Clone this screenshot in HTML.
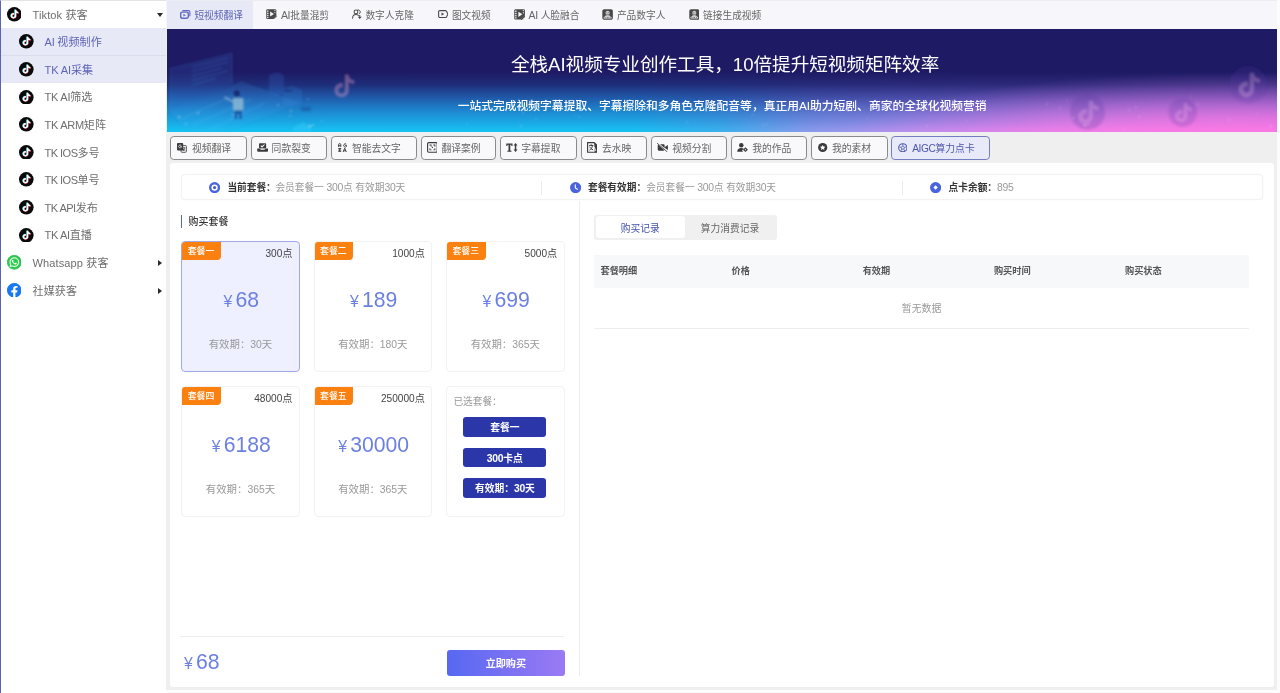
<!DOCTYPE html>
<html lang="zh-CN">
<head>
<meta charset="utf-8">
<title>AIGC算力点卡</title>
<style>
*{box-sizing:border-box;margin:0;padding:0}
html,body{width:1280px;height:693px;overflow:hidden;background:#fcfcfc}
body{font-family:"Liberation Sans","Noto Sans CJK SC",sans-serif;color:#666;position:relative;font-size:10.12px;line-height:1}
i{font-style:normal}
#root{position:absolute;left:0;top:0;width:1280px;height:693px;overflow:hidden;will-change:transform}
/* ---------- sidebar ---------- */
#side{position:absolute;left:0;top:0;width:166px;height:693px;background:#fff;border-left:1.2px solid #5c62b4;border-top:1px solid #e4e4e6}
#side .row{position:absolute;left:0;width:164.8px;height:27.6px;font-size:11.04px;color:#6e6e6e;white-space:nowrap;letter-spacing:.12px}
#side .row .ic{position:absolute;top:6.3px;width:14.6px;height:14.6px}
#side .row .tx{position:absolute;top:1px;line-height:27.6px}
#side .row.top .ic{left:5.6px}
#side .row.top .tx{left:31.5px}
#side .row.sub .ic{left:18.1px}
#side .row.sub .tx{left:43.6px}
#side .row.sel{background:#e8e9f7;color:#5c64b6}
#side .sep{position:absolute;left:0;top:54.3px;width:164.8px;height:.8px;background:#dcdcee}
#side .arr{position:absolute;width:0;height:0}
#side .arr.dn{left:155.5px;top:12.4px;border-left:3.3px solid transparent;border-right:3.3px solid transparent;border-top:4px solid #2a2a2a}
#side .arr.rt{left:156.7px;top:11.1px;border-top:3.4px solid transparent;border-bottom:3.4px solid transparent;border-left:4.4px solid #2a2a2a}
/* ---------- main ---------- */
#mainbg{position:absolute;left:166px;top:0;width:1111px;height:690px;background:#efefef}
#tabs{position:absolute;left:166px;top:0;width:1111px;height:29px;background:#f7f7fb;border-top:1px solid #ececf2}
#tabs .tab{position:absolute;top:0;height:28px;font-size:9.7px;color:#666;white-space:nowrap}
#tabs .tab svg{position:absolute}
#tabs .tab span{position:absolute;top:0;line-height:29px}
#tabs .tab.on{background:#e8e9f6;color:#5c64b6}
#banner{position:absolute;left:167px;top:29px;width:1110px;height:102.6px;overflow:hidden;background:linear-gradient(to right,#16c2f2 0%,#18c0f2 42%,#3cb0ee 50%,#8a9aec 58%,#b890ee 68%,#e482ea 80%,#f874e2 100%)}
#btns{position:absolute;left:0;top:0;width:1280px;height:0}
#btns .b{position:absolute;top:135.8px;height:24.2px;border:1.5px solid #8a8a8a;border-radius:3.8px;background:#f9f9fb;font-size:9.8px;color:#666;white-space:nowrap}
#btns .b svg{position:absolute}
#btns .b span{position:absolute;top:1.2px;line-height:21.6px}
#btns .b.on{border-color:#747dc0;background:#e8eafa;color:#4c56a8}
#btns .b.on .la{font-size:10.2px;letter-spacing:-.4px}
#panel{position:absolute;left:170.4px;top:163.4px;width:1103.4px;height:523.8px;background:#fff;border-radius:3px}
/* ---------- panel ---------- */
#panel i,#panel b,#panel span,#panel div{position:absolute;white-space:nowrap}
#panel b{font-weight:normal}
#panel .info{border:1px solid #f2f2f2;border-radius:4px;background:#fff;font-size:9.7px;box-shadow:0 0 1.5px rgba(0,0,0,.05)}
#panel .info .ii{position:absolute;top:7.4px;width:11.2px;height:11.2px}
#panel .info .lab{top:.6px;line-height:25.6px;color:#333;font-weight:bold}
#panel .info .val{top:.6px;line-height:25.6px;color:#999}
#panel .info .dv{top:6.4px;width:1px;height:13.6px;background:#ececec}
#panel .vline{width:1px;background:#ededed}
#panel .hline{height:1px;background:#eee}
#panel .tbar{width:1.5px;height:13px;background:#5866c6}
#panel .ttl{font-size:9.95px;margin-top:1px;line-height:14px;color:#333;font-weight:500}
#panel .card{width:118.6px;height:131px;border:1px solid #f2f2f2;border-radius:4px;background:#fff;overflow:hidden}
#panel .card.sel{border-color:#9fa9ea;background:#eeefff}
#panel .card .bdg{left:-1px;top:-1px;width:39.6px;height:18.4px;background:#fa8110;border-radius:4px 0 4px 0;color:#fff;font-size:8.9px;line-height:20.6px;text-align:center;font-weight:500}
#panel .card .pts{right:6.4px;top:3.7px;line-height:15px;color:#444;font-size:10.12px}
#panel .pr{color:#6c80e2;font-size:21.2px;line-height:24px;font-family:"Liberation Sans",sans-serif}
#panel .pr i{position:static;font-size:15.8px;margin-right:3.2px}
#panel .card .pr{left:0;width:118.2px;top:46.3px;text-align:center}
#panel .card .vd{left:0;width:116.6px;top:95.2px;line-height:15px;text-align:center;color:#999;font-size:10.4px}
#panel .card .ch{left:6.4px;top:6.8px;line-height:15px;color:#999;font-size:9.7px}
#panel .card .cb{left:16.4px;width:82.8px;height:19.8px;border-radius:3px;background:#2b37a8;color:#fff;font-size:9.75px;font-weight:bold;line-height:22.2px;text-align:center}
#panel .buy{width:118.6px;height:25.8px;border-radius:3px;background:linear-gradient(90deg,#5668f2,#9b7af4);color:#fff;font-size:10.12px;font-weight:bold;line-height:27.6px;text-align:center}
#panel .seg{width:183px;height:25.6px;border-radius:3px;background:#f0f0f0;font-size:9.75px}
#panel .seg .on{left:1.8px;top:1.8px;width:89.4px;height:22px;border-radius:3px;background:#fff;color:#4452ac;line-height:25px;text-align:center}
#panel .seg .off{left:91.2px;top:1.8px;width:90px;height:22px;color:#666;line-height:25px;text-align:center}
#panel .th{width:655.6px;height:33px;background:#f7f8fa;font-size:9.2px}
#panel .th b{top:.3px;line-height:33px;color:#555;font-weight:bold}
#panel .empty{width:655.6px;height:41.6px;border-bottom:1px solid #eee;line-height:42.2px;text-align:center;color:#999;font-size:9.9px}
/* ---------- banner ---------- */
#banner .bg{position:absolute;left:0;top:0;width:1110px;height:102.6px}
#banner .t1{position:absolute;left:0;width:1116.2px;top:24px;line-height:24px;text-align:center;color:#fff;font-size:18.58px;white-space:nowrap}
#banner .t2{position:absolute;left:0;width:1110.3px;top:68.3px;line-height:18px;text-align:center;color:#fff;font-size:11.78px;font-weight:500;white-space:nowrap}
.la{font-size:10.5px;letter-spacing:-.28px}
#panel .n{position:static;font-size:10.4px;letter-spacing:-.3px}
</style>
</head>
<body>
<div id="root">
<div id="mainbg"></div>
<div id="side">
<div class="row top" style="top:-0.3px"><svg class="ic" viewBox="0 0 48 48"><circle cx="24" cy="24" r="24" fill="#0a0a0a"/><g transform="translate(10.4 9) scale(1.2)"><path d="M12.525.02c1.31-.02 2.61-.01 3.91-.02.08 1.53.63 3.09 1.75 4.17 1.12 1.11 2.7 1.62 4.24 1.79v4.03c-1.44-.05-2.89-.35-4.2-.97-.57-.26-1.1-.59-1.62-.93-.01 2.92.01 5.84-.02 8.75-.08 1.4-.54 2.79-1.35 3.94-1.31 1.92-3.58 3.17-5.91 3.21-1.43.08-2.86-.31-4.08-1.03-2.02-1.19-3.44-3.37-3.65-5.71-.02-.5-.03-1-.01-1.49.18-1.9 1.12-3.72 2.58-4.96 1.66-1.44 3.98-2.13 6.15-1.72.02 1.48-.04 2.96-.04 4.44-.99-.32-2.15-.23-3.02.37-.63.41-1.11 1.04-1.36 1.75-.21.51-.15 1.07-.14 1.61.24 1.64 1.82 3.02 3.5 2.87 1.12-.01 2.19-.66 2.77-1.61.19-.33.4-.67.41-1.06.1-1.79.06-3.57.07-5.36.01-4.03-.01-8.05.02-12.07z" fill="#25f4ee" transform="translate(-1 -.8)"/><path d="M12.525.02c1.31-.02 2.61-.01 3.91-.02.08 1.53.63 3.09 1.75 4.17 1.12 1.11 2.7 1.62 4.24 1.79v4.03c-1.44-.05-2.89-.35-4.2-.97-.57-.26-1.1-.59-1.62-.93-.01 2.92.01 5.84-.02 8.75-.08 1.4-.54 2.79-1.35 3.94-1.31 1.92-3.58 3.17-5.91 3.21-1.43.08-2.86-.31-4.08-1.03-2.02-1.19-3.44-3.37-3.65-5.71-.02-.5-.03-1-.01-1.49.18-1.9 1.12-3.72 2.58-4.96 1.66-1.44 3.98-2.13 6.15-1.72.02 1.48-.04 2.96-.04 4.44-.99-.32-2.15-.23-3.02.37-.63.41-1.11 1.04-1.36 1.75-.21.51-.15 1.07-.14 1.61.24 1.64 1.82 3.02 3.5 2.87 1.12-.01 2.19-.66 2.77-1.61.19-.33.4-.67.41-1.06.1-1.79.06-3.57.07-5.36.01-4.03-.01-8.05.02-12.07z" fill="#fe2c55" transform="translate(1 .8)"/><path d="M12.525.02c1.31-.02 2.61-.01 3.91-.02.08 1.53.63 3.09 1.75 4.17 1.12 1.11 2.7 1.62 4.24 1.79v4.03c-1.44-.05-2.89-.35-4.2-.97-.57-.26-1.1-.59-1.62-.93-.01 2.92.01 5.84-.02 8.75-.08 1.4-.54 2.79-1.35 3.94-1.31 1.92-3.58 3.17-5.91 3.21-1.43.08-2.86-.31-4.08-1.03-2.02-1.19-3.44-3.37-3.65-5.71-.02-.5-.03-1-.01-1.49.18-1.9 1.12-3.72 2.58-4.96 1.66-1.44 3.98-2.13 6.15-1.72.02 1.48-.04 2.96-.04 4.44-.99-.32-2.15-.23-3.02.37-.63.41-1.11 1.04-1.36 1.75-.21.51-.15 1.07-.14 1.61.24 1.64 1.82 3.02 3.5 2.87 1.12-.01 2.19-.66 2.77-1.61.19-.33.4-.67.41-1.06.1-1.79.06-3.57.07-5.36.01-4.03-.01-8.05.02-12.07z" fill="#fff"/></g></svg><span class="tx">Tiktok 获客</span><i class="arr dn"></i></div>
<div class="row sub sel" style="top:27.1px"><svg class="ic" viewBox="0 0 48 48"><circle cx="24" cy="24" r="24" fill="#0a0a0a"/><g transform="translate(10.4 9) scale(1.2)"><path d="M12.525.02c1.31-.02 2.61-.01 3.91-.02.08 1.53.63 3.09 1.75 4.17 1.12 1.11 2.7 1.62 4.24 1.79v4.03c-1.44-.05-2.89-.35-4.2-.97-.57-.26-1.1-.59-1.62-.93-.01 2.92.01 5.84-.02 8.75-.08 1.4-.54 2.79-1.35 3.94-1.31 1.92-3.58 3.17-5.91 3.21-1.43.08-2.86-.31-4.08-1.03-2.02-1.19-3.44-3.37-3.65-5.71-.02-.5-.03-1-.01-1.49.18-1.9 1.12-3.72 2.58-4.96 1.66-1.44 3.98-2.13 6.15-1.72.02 1.48-.04 2.96-.04 4.44-.99-.32-2.15-.23-3.02.37-.63.41-1.11 1.04-1.36 1.75-.21.51-.15 1.07-.14 1.61.24 1.64 1.82 3.02 3.5 2.87 1.12-.01 2.19-.66 2.77-1.61.19-.33.4-.67.41-1.06.1-1.79.06-3.57.07-5.36.01-4.03-.01-8.05.02-12.07z" fill="#25f4ee" transform="translate(-1 -.8)"/><path d="M12.525.02c1.31-.02 2.61-.01 3.91-.02.08 1.53.63 3.09 1.75 4.17 1.12 1.11 2.7 1.62 4.24 1.79v4.03c-1.44-.05-2.89-.35-4.2-.97-.57-.26-1.1-.59-1.62-.93-.01 2.92.01 5.84-.02 8.75-.08 1.4-.54 2.79-1.35 3.94-1.31 1.92-3.58 3.17-5.91 3.21-1.43.08-2.86-.31-4.08-1.03-2.02-1.19-3.44-3.37-3.65-5.71-.02-.5-.03-1-.01-1.49.18-1.9 1.12-3.72 2.58-4.96 1.66-1.44 3.98-2.13 6.15-1.72.02 1.48-.04 2.96-.04 4.44-.99-.32-2.15-.23-3.02.37-.63.41-1.11 1.04-1.36 1.75-.21.51-.15 1.07-.14 1.61.24 1.64 1.82 3.02 3.5 2.87 1.12-.01 2.19-.66 2.77-1.61.19-.33.4-.67.41-1.06.1-1.79.06-3.57.07-5.36.01-4.03-.01-8.05.02-12.07z" fill="#fe2c55" transform="translate(1 .8)"/><path d="M12.525.02c1.31-.02 2.61-.01 3.91-.02.08 1.53.63 3.09 1.75 4.17 1.12 1.11 2.7 1.62 4.24 1.79v4.03c-1.44-.05-2.89-.35-4.2-.97-.57-.26-1.1-.59-1.62-.93-.01 2.92.01 5.84-.02 8.75-.08 1.4-.54 2.79-1.35 3.94-1.31 1.92-3.58 3.17-5.91 3.21-1.43.08-2.86-.31-4.08-1.03-2.02-1.19-3.44-3.37-3.65-5.71-.02-.5-.03-1-.01-1.49.18-1.9 1.12-3.72 2.58-4.96 1.66-1.44 3.98-2.13 6.15-1.72.02 1.48-.04 2.96-.04 4.44-.99-.32-2.15-.23-3.02.37-.63.41-1.11 1.04-1.36 1.75-.21.51-.15 1.07-.14 1.61.24 1.64 1.82 3.02 3.5 2.87 1.12-.01 2.19-.66 2.77-1.61.19-.33.4-.67.41-1.06.1-1.79.06-3.57.07-5.36.01-4.03-.01-8.05.02-12.07z" fill="#fff"/></g></svg><span class="tx"><i style="letter-spacing:-0.28px">AI </i>视频制作</span></div>
<div class="row sub sel" style="top:54.7px"><svg class="ic" viewBox="0 0 48 48"><circle cx="24" cy="24" r="24" fill="#0a0a0a"/><g transform="translate(10.4 9) scale(1.2)"><path d="M12.525.02c1.31-.02 2.61-.01 3.91-.02.08 1.53.63 3.09 1.75 4.17 1.12 1.11 2.7 1.62 4.24 1.79v4.03c-1.44-.05-2.89-.35-4.2-.97-.57-.26-1.1-.59-1.62-.93-.01 2.92.01 5.84-.02 8.75-.08 1.4-.54 2.79-1.35 3.94-1.31 1.92-3.58 3.17-5.91 3.21-1.43.08-2.86-.31-4.08-1.03-2.02-1.19-3.44-3.37-3.65-5.71-.02-.5-.03-1-.01-1.49.18-1.9 1.12-3.72 2.58-4.96 1.66-1.44 3.98-2.13 6.15-1.72.02 1.48-.04 2.96-.04 4.44-.99-.32-2.15-.23-3.02.37-.63.41-1.11 1.04-1.36 1.75-.21.51-.15 1.07-.14 1.61.24 1.64 1.82 3.02 3.5 2.87 1.12-.01 2.19-.66 2.77-1.61.19-.33.4-.67.41-1.06.1-1.79.06-3.57.07-5.36.01-4.03-.01-8.05.02-12.07z" fill="#25f4ee" transform="translate(-1 -.8)"/><path d="M12.525.02c1.31-.02 2.61-.01 3.91-.02.08 1.53.63 3.09 1.75 4.17 1.12 1.11 2.7 1.62 4.24 1.79v4.03c-1.44-.05-2.89-.35-4.2-.97-.57-.26-1.1-.59-1.62-.93-.01 2.92.01 5.84-.02 8.75-.08 1.4-.54 2.79-1.35 3.94-1.31 1.92-3.58 3.17-5.91 3.21-1.43.08-2.86-.31-4.08-1.03-2.02-1.19-3.44-3.37-3.65-5.71-.02-.5-.03-1-.01-1.49.18-1.9 1.12-3.72 2.58-4.96 1.66-1.44 3.98-2.13 6.15-1.72.02 1.48-.04 2.96-.04 4.44-.99-.32-2.15-.23-3.02.37-.63.41-1.11 1.04-1.36 1.75-.21.51-.15 1.07-.14 1.61.24 1.64 1.82 3.02 3.5 2.87 1.12-.01 2.19-.66 2.77-1.61.19-.33.4-.67.41-1.06.1-1.79.06-3.57.07-5.36.01-4.03-.01-8.05.02-12.07z" fill="#fe2c55" transform="translate(1 .8)"/><path d="M12.525.02c1.31-.02 2.61-.01 3.91-.02.08 1.53.63 3.09 1.75 4.17 1.12 1.11 2.7 1.62 4.24 1.79v4.03c-1.44-.05-2.89-.35-4.2-.97-.57-.26-1.1-.59-1.62-.93-.01 2.92.01 5.84-.02 8.75-.08 1.4-.54 2.79-1.35 3.94-1.31 1.92-3.58 3.17-5.91 3.21-1.43.08-2.86-.31-4.08-1.03-2.02-1.19-3.44-3.37-3.65-5.71-.02-.5-.03-1-.01-1.49.18-1.9 1.12-3.72 2.58-4.96 1.66-1.44 3.98-2.13 6.15-1.72.02 1.48-.04 2.96-.04 4.44-.99-.32-2.15-.23-3.02.37-.63.41-1.11 1.04-1.36 1.75-.21.51-.15 1.07-.14 1.61.24 1.64 1.82 3.02 3.5 2.87 1.12-.01 2.19-.66 2.77-1.61.19-.33.4-.67.41-1.06.1-1.79.06-3.57.07-5.36.01-4.03-.01-8.05.02-12.07z" fill="#fff"/></g></svg><span class="tx"><i style="letter-spacing:-0.14px">TK AI</i>采集</span></div>
<div class="row sub" style="top:82.3px"><svg class="ic" viewBox="0 0 48 48"><circle cx="24" cy="24" r="24" fill="#0a0a0a"/><g transform="translate(10.4 9) scale(1.2)"><path d="M12.525.02c1.31-.02 2.61-.01 3.91-.02.08 1.53.63 3.09 1.75 4.17 1.12 1.11 2.7 1.62 4.24 1.79v4.03c-1.44-.05-2.89-.35-4.2-.97-.57-.26-1.1-.59-1.62-.93-.01 2.92.01 5.84-.02 8.75-.08 1.4-.54 2.79-1.35 3.94-1.31 1.92-3.58 3.17-5.91 3.21-1.43.08-2.86-.31-4.08-1.03-2.02-1.19-3.44-3.37-3.65-5.71-.02-.5-.03-1-.01-1.49.18-1.9 1.12-3.72 2.58-4.96 1.66-1.44 3.98-2.13 6.15-1.72.02 1.48-.04 2.96-.04 4.44-.99-.32-2.15-.23-3.02.37-.63.41-1.11 1.04-1.36 1.75-.21.51-.15 1.07-.14 1.61.24 1.64 1.82 3.02 3.5 2.87 1.12-.01 2.19-.66 2.77-1.61.19-.33.4-.67.41-1.06.1-1.79.06-3.57.07-5.36.01-4.03-.01-8.05.02-12.07z" fill="#25f4ee" transform="translate(-1 -.8)"/><path d="M12.525.02c1.31-.02 2.61-.01 3.91-.02.08 1.53.63 3.09 1.75 4.17 1.12 1.11 2.7 1.62 4.24 1.79v4.03c-1.44-.05-2.89-.35-4.2-.97-.57-.26-1.1-.59-1.62-.93-.01 2.92.01 5.84-.02 8.75-.08 1.4-.54 2.79-1.35 3.94-1.31 1.92-3.58 3.17-5.91 3.21-1.43.08-2.86-.31-4.08-1.03-2.02-1.19-3.44-3.37-3.65-5.71-.02-.5-.03-1-.01-1.49.18-1.9 1.12-3.72 2.58-4.96 1.66-1.44 3.98-2.13 6.15-1.72.02 1.48-.04 2.96-.04 4.44-.99-.32-2.15-.23-3.02.37-.63.41-1.11 1.04-1.36 1.75-.21.51-.15 1.07-.14 1.61.24 1.64 1.82 3.02 3.5 2.87 1.12-.01 2.19-.66 2.77-1.61.19-.33.4-.67.41-1.06.1-1.79.06-3.57.07-5.36.01-4.03-.01-8.05.02-12.07z" fill="#fe2c55" transform="translate(1 .8)"/><path d="M12.525.02c1.31-.02 2.61-.01 3.91-.02.08 1.53.63 3.09 1.75 4.17 1.12 1.11 2.7 1.62 4.24 1.79v4.03c-1.44-.05-2.89-.35-4.2-.97-.57-.26-1.1-.59-1.62-.93-.01 2.92.01 5.84-.02 8.75-.08 1.4-.54 2.79-1.35 3.94-1.31 1.92-3.58 3.17-5.91 3.21-1.43.08-2.86-.31-4.08-1.03-2.02-1.19-3.44-3.37-3.65-5.71-.02-.5-.03-1-.01-1.49.18-1.9 1.12-3.72 2.58-4.96 1.66-1.44 3.98-2.13 6.15-1.72.02 1.48-.04 2.96-.04 4.44-.99-.32-2.15-.23-3.02.37-.63.41-1.11 1.04-1.36 1.75-.21.51-.15 1.07-.14 1.61.24 1.64 1.82 3.02 3.5 2.87 1.12-.01 2.19-.66 2.77-1.61.19-.33.4-.67.41-1.06.1-1.79.06-3.57.07-5.36.01-4.03-.01-8.05.02-12.07z" fill="#fff"/></g></svg><span class="tx"><i style="letter-spacing:-0.28px">TK AI</i>筛选</span></div>
<div class="row sub" style="top:109.9px"><svg class="ic" viewBox="0 0 48 48"><circle cx="24" cy="24" r="24" fill="#0a0a0a"/><g transform="translate(10.4 9) scale(1.2)"><path d="M12.525.02c1.31-.02 2.61-.01 3.91-.02.08 1.53.63 3.09 1.75 4.17 1.12 1.11 2.7 1.62 4.24 1.79v4.03c-1.44-.05-2.89-.35-4.2-.97-.57-.26-1.1-.59-1.62-.93-.01 2.92.01 5.84-.02 8.75-.08 1.4-.54 2.79-1.35 3.94-1.31 1.92-3.58 3.17-5.91 3.21-1.43.08-2.86-.31-4.08-1.03-2.02-1.19-3.44-3.37-3.65-5.71-.02-.5-.03-1-.01-1.49.18-1.9 1.12-3.72 2.58-4.96 1.66-1.44 3.98-2.13 6.15-1.72.02 1.48-.04 2.96-.04 4.44-.99-.32-2.15-.23-3.02.37-.63.41-1.11 1.04-1.36 1.75-.21.51-.15 1.07-.14 1.61.24 1.64 1.82 3.02 3.5 2.87 1.12-.01 2.19-.66 2.77-1.61.19-.33.4-.67.41-1.06.1-1.79.06-3.57.07-5.36.01-4.03-.01-8.05.02-12.07z" fill="#25f4ee" transform="translate(-1 -.8)"/><path d="M12.525.02c1.31-.02 2.61-.01 3.91-.02.08 1.53.63 3.09 1.75 4.17 1.12 1.11 2.7 1.62 4.24 1.79v4.03c-1.44-.05-2.89-.35-4.2-.97-.57-.26-1.1-.59-1.62-.93-.01 2.92.01 5.84-.02 8.75-.08 1.4-.54 2.79-1.35 3.94-1.31 1.92-3.58 3.17-5.91 3.21-1.43.08-2.86-.31-4.08-1.03-2.02-1.19-3.44-3.37-3.65-5.71-.02-.5-.03-1-.01-1.49.18-1.9 1.12-3.72 2.58-4.96 1.66-1.44 3.98-2.13 6.15-1.72.02 1.48-.04 2.96-.04 4.44-.99-.32-2.15-.23-3.02.37-.63.41-1.11 1.04-1.36 1.75-.21.51-.15 1.07-.14 1.61.24 1.64 1.82 3.02 3.5 2.87 1.12-.01 2.19-.66 2.77-1.61.19-.33.4-.67.41-1.06.1-1.79.06-3.57.07-5.36.01-4.03-.01-8.05.02-12.07z" fill="#fe2c55" transform="translate(1 .8)"/><path d="M12.525.02c1.31-.02 2.61-.01 3.91-.02.08 1.53.63 3.09 1.75 4.17 1.12 1.11 2.7 1.62 4.24 1.79v4.03c-1.44-.05-2.89-.35-4.2-.97-.57-.26-1.1-.59-1.62-.93-.01 2.92.01 5.84-.02 8.75-.08 1.4-.54 2.79-1.35 3.94-1.31 1.92-3.58 3.17-5.91 3.21-1.43.08-2.86-.31-4.08-1.03-2.02-1.19-3.44-3.37-3.65-5.71-.02-.5-.03-1-.01-1.49.18-1.9 1.12-3.72 2.58-4.96 1.66-1.44 3.98-2.13 6.15-1.72.02 1.48-.04 2.96-.04 4.44-.99-.32-2.15-.23-3.02.37-.63.41-1.11 1.04-1.36 1.75-.21.51-.15 1.07-.14 1.61.24 1.64 1.82 3.02 3.5 2.87 1.12-.01 2.19-.66 2.77-1.61.19-.33.4-.67.41-1.06.1-1.79.06-3.57.07-5.36.01-4.03-.01-8.05.02-12.07z" fill="#fff"/></g></svg><span class="tx"><i style="letter-spacing:-0.31px">TK ARM</i>矩阵</span></div>
<div class="row sub" style="top:137.5px"><svg class="ic" viewBox="0 0 48 48"><circle cx="24" cy="24" r="24" fill="#0a0a0a"/><g transform="translate(10.4 9) scale(1.2)"><path d="M12.525.02c1.31-.02 2.61-.01 3.91-.02.08 1.53.63 3.09 1.75 4.17 1.12 1.11 2.7 1.62 4.24 1.79v4.03c-1.44-.05-2.89-.35-4.2-.97-.57-.26-1.1-.59-1.62-.93-.01 2.92.01 5.84-.02 8.75-.08 1.4-.54 2.79-1.35 3.94-1.31 1.92-3.58 3.17-5.91 3.21-1.43.08-2.86-.31-4.08-1.03-2.02-1.19-3.44-3.37-3.65-5.71-.02-.5-.03-1-.01-1.49.18-1.9 1.12-3.72 2.58-4.96 1.66-1.44 3.98-2.13 6.15-1.72.02 1.48-.04 2.96-.04 4.44-.99-.32-2.15-.23-3.02.37-.63.41-1.11 1.04-1.36 1.75-.21.51-.15 1.07-.14 1.61.24 1.64 1.82 3.02 3.5 2.87 1.12-.01 2.19-.66 2.77-1.61.19-.33.4-.67.41-1.06.1-1.79.06-3.57.07-5.36.01-4.03-.01-8.05.02-12.07z" fill="#25f4ee" transform="translate(-1 -.8)"/><path d="M12.525.02c1.31-.02 2.61-.01 3.91-.02.08 1.53.63 3.09 1.75 4.17 1.12 1.11 2.7 1.62 4.24 1.79v4.03c-1.44-.05-2.89-.35-4.2-.97-.57-.26-1.1-.59-1.62-.93-.01 2.92.01 5.84-.02 8.75-.08 1.4-.54 2.79-1.35 3.94-1.31 1.92-3.58 3.17-5.91 3.21-1.43.08-2.86-.31-4.08-1.03-2.02-1.19-3.44-3.37-3.65-5.71-.02-.5-.03-1-.01-1.49.18-1.9 1.12-3.72 2.58-4.96 1.66-1.44 3.98-2.13 6.15-1.72.02 1.48-.04 2.96-.04 4.44-.99-.32-2.15-.23-3.02.37-.63.41-1.11 1.04-1.36 1.75-.21.51-.15 1.07-.14 1.61.24 1.64 1.82 3.02 3.5 2.87 1.12-.01 2.19-.66 2.77-1.61.19-.33.4-.67.41-1.06.1-1.79.06-3.57.07-5.36.01-4.03-.01-8.05.02-12.07z" fill="#fe2c55" transform="translate(1 .8)"/><path d="M12.525.02c1.31-.02 2.61-.01 3.91-.02.08 1.53.63 3.09 1.75 4.17 1.12 1.11 2.7 1.62 4.24 1.79v4.03c-1.44-.05-2.89-.35-4.2-.97-.57-.26-1.1-.59-1.62-.93-.01 2.92.01 5.84-.02 8.75-.08 1.4-.54 2.79-1.35 3.94-1.31 1.92-3.58 3.17-5.91 3.21-1.43.08-2.86-.31-4.08-1.03-2.02-1.19-3.44-3.37-3.65-5.71-.02-.5-.03-1-.01-1.49.18-1.9 1.12-3.72 2.58-4.96 1.66-1.44 3.98-2.13 6.15-1.72.02 1.48-.04 2.96-.04 4.44-.99-.32-2.15-.23-3.02.37-.63.41-1.11 1.04-1.36 1.75-.21.51-.15 1.07-.14 1.61.24 1.64 1.82 3.02 3.5 2.87 1.12-.01 2.19-.66 2.77-1.61.19-.33.4-.67.41-1.06.1-1.79.06-3.57.07-5.36.01-4.03-.01-8.05.02-12.07z" fill="#fff"/></g></svg><span class="tx"><i style="letter-spacing:-0.55px">TK IOS</i>多号</span></div>
<div class="row sub" style="top:165.1px"><svg class="ic" viewBox="0 0 48 48"><circle cx="24" cy="24" r="24" fill="#0a0a0a"/><g transform="translate(10.4 9) scale(1.2)"><path d="M12.525.02c1.31-.02 2.61-.01 3.91-.02.08 1.53.63 3.09 1.75 4.17 1.12 1.11 2.7 1.62 4.24 1.79v4.03c-1.44-.05-2.89-.35-4.2-.97-.57-.26-1.1-.59-1.62-.93-.01 2.92.01 5.84-.02 8.75-.08 1.4-.54 2.79-1.35 3.94-1.31 1.92-3.58 3.17-5.91 3.21-1.43.08-2.86-.31-4.08-1.03-2.02-1.19-3.44-3.37-3.65-5.71-.02-.5-.03-1-.01-1.49.18-1.9 1.12-3.72 2.58-4.96 1.66-1.44 3.98-2.13 6.15-1.72.02 1.48-.04 2.96-.04 4.44-.99-.32-2.15-.23-3.02.37-.63.41-1.11 1.04-1.36 1.75-.21.51-.15 1.07-.14 1.61.24 1.64 1.82 3.02 3.5 2.87 1.12-.01 2.19-.66 2.77-1.61.19-.33.4-.67.41-1.06.1-1.79.06-3.57.07-5.36.01-4.03-.01-8.05.02-12.07z" fill="#25f4ee" transform="translate(-1 -.8)"/><path d="M12.525.02c1.31-.02 2.61-.01 3.91-.02.08 1.53.63 3.09 1.75 4.17 1.12 1.11 2.7 1.62 4.24 1.79v4.03c-1.44-.05-2.89-.35-4.2-.97-.57-.26-1.1-.59-1.62-.93-.01 2.92.01 5.84-.02 8.75-.08 1.4-.54 2.79-1.35 3.94-1.31 1.92-3.58 3.17-5.91 3.21-1.43.08-2.86-.31-4.08-1.03-2.02-1.19-3.44-3.37-3.65-5.71-.02-.5-.03-1-.01-1.49.18-1.9 1.12-3.72 2.58-4.96 1.66-1.44 3.98-2.13 6.15-1.72.02 1.48-.04 2.96-.04 4.44-.99-.32-2.15-.23-3.02.37-.63.41-1.11 1.04-1.36 1.75-.21.51-.15 1.07-.14 1.61.24 1.64 1.82 3.02 3.5 2.87 1.12-.01 2.19-.66 2.77-1.61.19-.33.4-.67.41-1.06.1-1.79.06-3.57.07-5.36.01-4.03-.01-8.05.02-12.07z" fill="#fe2c55" transform="translate(1 .8)"/><path d="M12.525.02c1.31-.02 2.61-.01 3.91-.02.08 1.53.63 3.09 1.75 4.17 1.12 1.11 2.7 1.62 4.24 1.79v4.03c-1.44-.05-2.89-.35-4.2-.97-.57-.26-1.1-.59-1.62-.93-.01 2.92.01 5.84-.02 8.75-.08 1.4-.54 2.79-1.35 3.94-1.31 1.92-3.58 3.17-5.91 3.21-1.43.08-2.86-.31-4.08-1.03-2.02-1.19-3.44-3.37-3.65-5.71-.02-.5-.03-1-.01-1.49.18-1.9 1.12-3.72 2.58-4.96 1.66-1.44 3.98-2.13 6.15-1.72.02 1.48-.04 2.96-.04 4.44-.99-.32-2.15-.23-3.02.37-.63.41-1.11 1.04-1.36 1.75-.21.51-.15 1.07-.14 1.61.24 1.64 1.82 3.02 3.5 2.87 1.12-.01 2.19-.66 2.77-1.61.19-.33.4-.67.41-1.06.1-1.79.06-3.57.07-5.36.01-4.03-.01-8.05.02-12.07z" fill="#fff"/></g></svg><span class="tx"><i style="letter-spacing:-0.55px">TK IOS</i>单号</span></div>
<div class="row sub" style="top:192.7px"><svg class="ic" viewBox="0 0 48 48"><circle cx="24" cy="24" r="24" fill="#0a0a0a"/><g transform="translate(10.4 9) scale(1.2)"><path d="M12.525.02c1.31-.02 2.61-.01 3.91-.02.08 1.53.63 3.09 1.75 4.17 1.12 1.11 2.7 1.62 4.24 1.79v4.03c-1.44-.05-2.89-.35-4.2-.97-.57-.26-1.1-.59-1.62-.93-.01 2.92.01 5.84-.02 8.75-.08 1.4-.54 2.79-1.35 3.94-1.31 1.92-3.58 3.17-5.91 3.21-1.43.08-2.86-.31-4.08-1.03-2.02-1.19-3.44-3.37-3.65-5.71-.02-.5-.03-1-.01-1.49.18-1.9 1.12-3.72 2.58-4.96 1.66-1.44 3.98-2.13 6.15-1.72.02 1.48-.04 2.96-.04 4.44-.99-.32-2.15-.23-3.02.37-.63.41-1.11 1.04-1.36 1.75-.21.51-.15 1.07-.14 1.61.24 1.64 1.82 3.02 3.5 2.87 1.12-.01 2.19-.66 2.77-1.61.19-.33.4-.67.41-1.06.1-1.79.06-3.57.07-5.36.01-4.03-.01-8.05.02-12.07z" fill="#25f4ee" transform="translate(-1 -.8)"/><path d="M12.525.02c1.31-.02 2.61-.01 3.91-.02.08 1.53.63 3.09 1.75 4.17 1.12 1.11 2.7 1.62 4.24 1.79v4.03c-1.44-.05-2.89-.35-4.2-.97-.57-.26-1.1-.59-1.62-.93-.01 2.92.01 5.84-.02 8.75-.08 1.4-.54 2.79-1.35 3.94-1.31 1.92-3.58 3.17-5.91 3.21-1.43.08-2.86-.31-4.08-1.03-2.02-1.19-3.44-3.37-3.65-5.71-.02-.5-.03-1-.01-1.49.18-1.9 1.12-3.72 2.58-4.96 1.66-1.44 3.98-2.13 6.15-1.72.02 1.48-.04 2.96-.04 4.44-.99-.32-2.15-.23-3.02.37-.63.41-1.11 1.04-1.36 1.75-.21.51-.15 1.07-.14 1.61.24 1.64 1.82 3.02 3.5 2.87 1.12-.01 2.19-.66 2.77-1.61.19-.33.4-.67.41-1.06.1-1.79.06-3.57.07-5.36.01-4.03-.01-8.05.02-12.07z" fill="#fe2c55" transform="translate(1 .8)"/><path d="M12.525.02c1.31-.02 2.61-.01 3.91-.02.08 1.53.63 3.09 1.75 4.17 1.12 1.11 2.7 1.62 4.24 1.79v4.03c-1.44-.05-2.89-.35-4.2-.97-.57-.26-1.1-.59-1.62-.93-.01 2.92.01 5.84-.02 8.75-.08 1.4-.54 2.79-1.35 3.94-1.31 1.92-3.58 3.17-5.91 3.21-1.43.08-2.86-.31-4.08-1.03-2.02-1.19-3.44-3.37-3.65-5.71-.02-.5-.03-1-.01-1.49.18-1.9 1.12-3.72 2.58-4.96 1.66-1.44 3.98-2.13 6.15-1.72.02 1.48-.04 2.96-.04 4.44-.99-.32-2.15-.23-3.02.37-.63.41-1.11 1.04-1.36 1.75-.21.51-.15 1.07-.14 1.61.24 1.64 1.82 3.02 3.5 2.87 1.12-.01 2.19-.66 2.77-1.61.19-.33.4-.67.41-1.06.1-1.79.06-3.57.07-5.36.01-4.03-.01-8.05.02-12.07z" fill="#fff"/></g></svg><span class="tx"><i style="letter-spacing:-0.55px">TK API</i>发布</span></div>
<div class="row sub" style="top:220.3px"><svg class="ic" viewBox="0 0 48 48"><circle cx="24" cy="24" r="24" fill="#0a0a0a"/><g transform="translate(10.4 9) scale(1.2)"><path d="M12.525.02c1.31-.02 2.61-.01 3.91-.02.08 1.53.63 3.09 1.75 4.17 1.12 1.11 2.7 1.62 4.24 1.79v4.03c-1.44-.05-2.89-.35-4.2-.97-.57-.26-1.1-.59-1.62-.93-.01 2.92.01 5.84-.02 8.75-.08 1.4-.54 2.79-1.35 3.94-1.31 1.92-3.58 3.17-5.91 3.21-1.43.08-2.86-.31-4.08-1.03-2.02-1.19-3.44-3.37-3.65-5.71-.02-.5-.03-1-.01-1.49.18-1.9 1.12-3.72 2.58-4.96 1.66-1.44 3.98-2.13 6.15-1.72.02 1.48-.04 2.96-.04 4.44-.99-.32-2.15-.23-3.02.37-.63.41-1.11 1.04-1.36 1.75-.21.51-.15 1.07-.14 1.61.24 1.64 1.82 3.02 3.5 2.87 1.12-.01 2.19-.66 2.77-1.61.19-.33.4-.67.41-1.06.1-1.79.06-3.57.07-5.36.01-4.03-.01-8.05.02-12.07z" fill="#25f4ee" transform="translate(-1 -.8)"/><path d="M12.525.02c1.31-.02 2.61-.01 3.91-.02.08 1.53.63 3.09 1.75 4.17 1.12 1.11 2.7 1.62 4.24 1.79v4.03c-1.44-.05-2.89-.35-4.2-.97-.57-.26-1.1-.59-1.62-.93-.01 2.92.01 5.84-.02 8.75-.08 1.4-.54 2.79-1.35 3.94-1.31 1.92-3.58 3.17-5.91 3.21-1.43.08-2.86-.31-4.08-1.03-2.02-1.19-3.44-3.37-3.65-5.71-.02-.5-.03-1-.01-1.49.18-1.9 1.12-3.72 2.58-4.96 1.66-1.44 3.98-2.13 6.15-1.72.02 1.48-.04 2.96-.04 4.44-.99-.32-2.15-.23-3.02.37-.63.41-1.11 1.04-1.36 1.75-.21.51-.15 1.07-.14 1.61.24 1.64 1.82 3.02 3.5 2.87 1.12-.01 2.19-.66 2.77-1.61.19-.33.4-.67.41-1.06.1-1.79.06-3.57.07-5.36.01-4.03-.01-8.05.02-12.07z" fill="#fe2c55" transform="translate(1 .8)"/><path d="M12.525.02c1.31-.02 2.61-.01 3.91-.02.08 1.53.63 3.09 1.75 4.17 1.12 1.11 2.7 1.62 4.24 1.79v4.03c-1.44-.05-2.89-.35-4.2-.97-.57-.26-1.1-.59-1.62-.93-.01 2.92.01 5.84-.02 8.75-.08 1.4-.54 2.79-1.35 3.94-1.31 1.92-3.58 3.17-5.91 3.21-1.43.08-2.86-.31-4.08-1.03-2.02-1.19-3.44-3.37-3.65-5.71-.02-.5-.03-1-.01-1.49.18-1.9 1.12-3.72 2.58-4.96 1.66-1.44 3.98-2.13 6.15-1.72.02 1.48-.04 2.96-.04 4.44-.99-.32-2.15-.23-3.02.37-.63.41-1.11 1.04-1.36 1.75-.21.51-.15 1.07-.14 1.61.24 1.64 1.82 3.02 3.5 2.87 1.12-.01 2.19-.66 2.77-1.61.19-.33.4-.67.41-1.06.1-1.79.06-3.57.07-5.36.01-4.03-.01-8.05.02-12.07z" fill="#fff"/></g></svg><span class="tx"><i style="letter-spacing:-0.38px">TK AI</i>直播</span></div>
<div class="row top" style="top:247.9px"><svg class="ic" viewBox="0 0 48 48"><circle cx="24" cy="24" r="23" fill="#2ccb4e" stroke="#1fb040" stroke-width="2"/><g transform="translate(8.4 8) scale(1.3)"><path d="M17.472 14.382c-.297-.149-1.758-.867-2.03-.967-.273-.099-.471-.148-.67.15-.197.297-.767.966-.94 1.164-.173.199-.347.223-.644.075-.297-.15-1.255-.463-2.39-1.475-.883-.788-1.48-1.761-1.653-2.059-.173-.297-.018-.458.13-.606.134-.133.298-.347.446-.52.149-.174.198-.298.298-.497.099-.198.05-.371-.025-.52-.075-.149-.669-1.612-.916-2.207-.242-.579-.487-.5-.669-.51-.173-.008-.371-.01-.57-.01-.198 0-.52.074-.792.372-.272.297-1.04 1.016-1.04 2.479 0 1.462 1.065 2.875 1.213 3.074.149.198 2.096 3.2 5.077 4.487.709.306 1.262.489 1.694.625.712.227 1.36.195 1.871.118.571-.085 1.758-.719 2.006-1.413.248-.694.248-1.289.173-1.413-.074-.124-.272-.198-.57-.347m-5.421 7.403h-.004a9.87 9.87 0 01-5.031-1.378l-.361-.214-3.741.982.998-3.648-.235-.374a9.86 9.86 0 01-1.51-5.26c.001-5.45 4.436-9.884 9.888-9.884 2.64 0 5.122 1.03 6.988 2.898a9.825 9.825 0 012.893 6.994c-.003 5.45-4.437 9.884-9.885 9.884m8.413-18.297A11.815 11.815 0 0012.05 0C5.495 0 .16 5.335.157 11.892c0 2.096.547 4.142 1.588 5.945L.057 24l6.305-1.654a11.882 11.882 0 005.683 1.448h.005c6.554 0 11.89-5.335 11.893-11.893a11.821 11.821 0 00-3.48-8.413z" fill="#fff" stroke="#fff" stroke-width=".5"/></g></svg><span class="tx">Whatsapp 获客</span><i class="arr rt"></i></div>
<div class="row top" style="top:275.5px"><svg class="ic" viewBox="0 0 24 24"><circle cx="12" cy="12" r="11.6" fill="#fff"/><path d="M24 12.073c0-6.627-5.373-12-12-12s-12 5.373-12 12c0 5.99 4.388 10.954 10.125 11.854v-8.385H7.078v-3.47h3.047V9.43c0-3.007 1.792-4.669 4.533-4.669 1.312 0 2.686.235 2.686.235v2.953H15.83c-1.491 0-1.956.925-1.956 1.874v2.25h3.328l-.532 3.47h-2.796v8.385C19.612 23.027 24 18.062 24 12.073z" fill="#1877f2"/></svg><span class="tx">社媒获客</span><i class="arr rt"></i></div>
<div class="sep"></div>
</div>
<div id="tabs">
<div class="tab on" style="left:1.0px;width:85.5px"><svg viewBox="0 0 21 18" preserveAspectRatio="none" style="left:13.2px;top:9.2px;width:10.5px;height:8.9px"><path d="M5.5 1.3h11.300a3 3 0 0 1 3 3v7.200" fill="none" stroke="#636bc0" stroke-width="2.2" stroke-linecap="round"/><rect x="1.300" y="4.300" width="15.400" height="12.400" rx="3.400" fill="none" stroke="#636bc0" stroke-width="3"/><path d="M6.800 7.600l5 2.900-5 2.900z" fill="#636bc0"/></svg><span style="left:27.4px">短视频翻译</span></div>
<div class="tab" style="left:86.5px;width:85.5px"><svg viewBox="0 0 21 21" preserveAspectRatio="none" style="left:13.6px;top:7.9px;width:10.6px;height:10.4px"><rect x=".5" y=".5" width="20" height="20" rx="2.600" fill="#484848"/><g fill="#f7f7fb"><rect x="2.200" y="3" width="2.600" height="2.600"/><rect x="2.200" y="7.400" width="2.600" height="2.600"/><rect x="2.200" y="11.800" width="2.600" height="2.600"/><rect x="2.200" y="16" width="2.600" height="2.400"/><path d="M8.200 5.200l7.600 5.100-7.600 5.100z"/><path d="M12.500 21l8.500-8.500v8.500z"/></g><path d="M14.200 20.300l6-6" stroke="#484848" stroke-width="2.200" stroke-linecap="round"/><path d="M16.500 3.200h2.200M16.500 7.400h2.200" stroke="#f7f7fb" stroke-width="1.800"/></svg><span style="left:28.4px"><i class="la">AI</i>批量混剪</span></div>
<div class="tab" style="left:172.0px;width:86.0px"><svg viewBox="0 0 20 20" preserveAspectRatio="none" style="left:13.8px;top:8.2px;width:10.2px;height:10.3px"><circle cx="7.800" cy="5.600" r="3.700" fill="none" stroke="#484848" stroke-width="2"/><path d="M1.200 18c0-4.600 2.700-7.200 6.600-7.200 1.900 0 3.500.6 4.700 1.700" fill="none" stroke="#484848" stroke-width="2" stroke-linecap="round"/><path d="M11.800 1.600c2.700.3 4.400 2 4.400 4.300 0 1.300-.5 2.300-1.400 3.100" fill="none" stroke="#484848" stroke-width="1.900" stroke-linecap="round"/><path d="M15.200 11.500v5" fill="none" stroke="#484848" stroke-width="2"/><path d="M11.400 15.200h7.600l-3.800 4.400z" fill="#484848"/></svg><span style="left:27.4px">数字人克隆</span></div>
<div class="tab" style="left:258.0px;width:76.0px"><svg viewBox="0 0 20 16" preserveAspectRatio="none" style="left:13.8px;top:9.4px;width:10.3px;height:8.2px"><path d="M3.600 1.200h10.600c1 0 1.700.4 2.200 1.200l2.300 4.300c.4.800.4 1.800 0 2.600l-2.300 4.300c-.5.800-1.200 1.200-2.200 1.200H3.600a2.400 2.400 0 0 1-2.400-2.400V3.600a2.400 2.400 0 0 1 2.400-2.400z" fill="none" stroke="#484848" stroke-width="2.100"/><path d="M6.800 4.800l5.200 3.200-5.200 3.200z" fill="#484848"/></svg><span style="left:27.9px">图文视频</span></div>
<div class="tab" style="left:334.0px;width:88.0px"><svg viewBox="0 0 21 21" preserveAspectRatio="none" style="left:13.9px;top:7.9px;width:11.2px;height:10.8px"><rect x=".5" y=".5" width="20" height="20" rx="2.600" fill="#484848"/><g fill="#f7f7fb"><rect x="2.200" y="3" width="2.600" height="2.600"/><rect x="2.200" y="7.400" width="2.600" height="2.600"/><rect x="2.200" y="11.800" width="2.600" height="2.600"/><rect x="2.200" y="16" width="2.600" height="2.400"/><path d="M8.200 5.200l7.600 5.100-7.600 5.100z"/><path d="M12.500 21l8.500-8.500v8.500z"/></g><path d="M14.200 20.300l6-6" stroke="#484848" stroke-width="2.200" stroke-linecap="round"/><path d="M16.500 3.200h2.200M16.500 7.400h2.200" stroke="#f7f7fb" stroke-width="1.800"/></svg><span style="left:28.6px"><i class="la">AI</i> 人脸融合</span></div>
<div class="tab" style="left:422.0px;width:86.0px"><svg viewBox="0 0 22 22" preserveAspectRatio="none" style="left:14.3px;top:7.9px;width:11.2px;height:11.1px"><rect x=".6" y=".6" width="20.800" height="20.800" rx="3.600" fill="#484848"/><g fill="#c8c8c8"><circle cx="11" cy="7.800" r="4.200"/><path d="M5.400 16c.4-2.600 2.400-4 5.600-4s5.200 1.400 5.600 4z"/></g><g fill="#484848"><circle cx="9.400" cy="7.600" r=".9"/><circle cx="12.600" cy="7.600" r=".9"/><path d="M9.200 9.800h3.600v.9h-3.600z"/></g><rect x="3.200" y="15.400" width="15.600" height="3.200" rx=".8" fill="#eee"/><g fill="#484848"><rect x="5" y="16.300" width="2.200" height="1.400"/><rect x="9" y="16.300" width="4" height="1.400"/><rect x="14.800" y="16.300" width="2.200" height="1.400"/></g></svg><span style="left:28.9px">产品数字人</span></div>
<div class="tab" style="left:508.0px;width:97.0px"><svg viewBox="0 0 22 22" preserveAspectRatio="none" style="left:14.7px;top:7.9px;width:10.6px;height:11.1px"><rect x=".6" y=".6" width="20.800" height="20.800" rx="3.600" fill="#484848"/><g fill="#c8c8c8"><circle cx="11" cy="7.800" r="4.200"/><path d="M5.400 16c.4-2.600 2.400-4 5.600-4s5.200 1.400 5.600 4z"/></g><g fill="#484848"><circle cx="9.400" cy="7.600" r=".9"/><circle cx="12.600" cy="7.600" r=".9"/><path d="M9.200 9.800h3.600v.9h-3.600z"/></g><rect x="3.200" y="15.400" width="15.600" height="3.200" rx=".8" fill="#eee"/><g fill="#484848"><rect x="5" y="16.300" width="2.200" height="1.400"/><rect x="9" y="16.300" width="4" height="1.400"/><rect x="14.800" y="16.300" width="2.200" height="1.400"/></g></svg><span style="left:29.1px">链接生成视频</span></div>
</div>
<div id="banner">
<svg class="bg" viewBox="0 0 1110 102.6" preserveAspectRatio="none">
<defs>
<linearGradient id="gh" x1="0" y1="0" x2="1" y2="0"><stop offset="0" stop-color="#16c2f2"/><stop offset=".42" stop-color="#18c0f2"/><stop offset=".5" stop-color="#3cb0ee"/><stop offset=".58" stop-color="#8a9aec"/><stop offset=".68" stop-color="#b890ee"/><stop offset=".8" stop-color="#e482ea"/><stop offset="1" stop-color="#f874e2"/></linearGradient>
<linearGradient id="gv" x1="0" y1="0" x2="0" y2="1"><stop offset="0" stop-color="#1e1a64"/><stop offset=".42" stop-color="#1e1a64"/><stop offset=".54" stop-color="#1f2270" stop-opacity=".93"/><stop offset=".66" stop-color="#22308a" stop-opacity=".74"/><stop offset=".78" stop-color="#2444a4" stop-opacity=".52"/><stop offset=".9" stop-color="#2458b8" stop-opacity=".27"/><stop offset=".97" stop-color="#2458b8" stop-opacity=".06"/><stop offset="1" stop-color="#2448a8" stop-opacity="0"/></linearGradient>
<radialGradient id="gp" gradientUnits="userSpaceOnUse" cx="0" cy="0" r="1" gradientTransform="translate(1070 118) scale(400 75)"><stop offset="0" stop-color="#ff78e4" stop-opacity=".85"/><stop offset=".4" stop-color="#fa7ae6" stop-opacity=".62"/><stop offset=".7" stop-color="#e87ce8" stop-opacity=".3"/><stop offset="1" stop-color="#d07ce8" stop-opacity="0"/></radialGradient>
<filter id="bl" x="-20%" y="-20%" width="140%" height="140%"><feGaussianBlur stdDeviation=".8"/></filter>
</defs>
<rect width="1110" height="102.6" fill="url(#gh)"/>
<rect width="1110" height="102.6" fill="url(#gv)"/>
<rect x="0" y="0" width="1110" height="102.6" fill="url(#gp)"/>
<g filter="url(#bl)">
<path d="M3.3 39.6L65 24.3V54.8L3.3 82.7z" fill="#3c8cf0" fill-opacity=".13"/>
<path d="M3.3 39.6L65 24.3V54.8L3.3 82.7z" fill="none" stroke="#58a8ff" stroke-opacity=".22" stroke-width=".8"/>
<path d="M25 38l36-9M25 42.5l36-9.500M25 47l30-8M25 51.500l36-10M25 56l24-7" stroke="#5ab0ff" stroke-opacity=".16" stroke-width="1.400" fill="none"/>
<path d="M3.3 83.4L74.4 52.2L132.8 73.4L60 102.6H20z" fill="#38a0f0" fill-opacity=".16"/>
<path d="M14 90L70 65M26 96L84 70M40 102L98 74" stroke="#7fd0ff" stroke-opacity=".12" stroke-width="2" fill="none"/>
<path d="M102 46l8-3 7 3v18l-7 4-8-4z" fill="#3a78d8" fill-opacity=".22"/>
<path d="M116 60l9-3 10 4v14l-10 4-9-4z" fill="#3a88e0" fill-opacity=".22"/>
<ellipse cx="121" cy="61.500" rx="5" ry="1.800" fill="#142a78" fill-opacity=".5"/>
<ellipse cx="139" cy="80" rx="5.500" ry="2" fill="#14408c" fill-opacity=".45"/>
<path d="M126 98l10-5 8 5v4.600h-18z" fill="#40d0ff" fill-opacity=".35"/>
<circle cx="69.700" cy="64.300" r="3.500" fill="#16286c" fill-opacity=".85"/>
<path d="M66 69h10.400v12.500h-10.400z" fill="#8cb8d4" fill-opacity=".85"/>
<path d="M66.500 73l-8.500-4.500" stroke="#8cb8d4" stroke-opacity=".8" stroke-width="1.800" stroke-linecap="round"/>
<path d="M67.500 81.500h7.500v8.500h-2.800v-5h-1.900v5h-2.800z" fill="#1a50a0" fill-opacity=".8"/>
<g transform="translate(166 45.500) scale(.95)" opacity=".38" filter="url(#bl)"><path d="M12.525.02c1.31-.02 2.61-.01 3.91-.02.08 1.53.63 3.09 1.75 4.17 1.12 1.11 2.7 1.62 4.24 1.79v4.03c-1.44-.05-2.89-.35-4.2-.97-.57-.26-1.1-.59-1.62-.93-.01 2.92.01 5.84-.02 8.75-.08 1.4-.54 2.79-1.35 3.94-1.31 1.92-3.58 3.17-5.91 3.21-1.43.08-2.86-.31-4.08-1.03-2.02-1.19-3.44-3.37-3.65-5.71-.02-.5-.03-1-.01-1.49.18-1.9 1.12-3.72 2.58-4.96 1.66-1.44 3.98-2.13 6.15-1.72.02 1.48-.04 2.96-.04 4.44-.99-.32-2.15-.23-3.02.37-.63.41-1.11 1.04-1.36 1.75-.21.51-.15 1.07-.14 1.61.24 1.64 1.82 3.02 3.5 2.87 1.12-.01 2.19-.66 2.77-1.61.19-.33.4-.67.41-1.06.1-1.79.06-3.57.07-5.36.01-4.03-.01-8.05.02-12.07z" fill="#e8a0c8"/></g>
<circle cx="920.5" cy="83.1" r="17.5" fill="#5a3ca8" fill-opacity="0.26"/>
<g transform="translate(910.0 71.7) scale(0.950)" opacity=".24"><path d="M12.525.02c1.31-.02 2.61-.01 3.91-.02.08 1.53.63 3.09 1.75 4.17 1.12 1.11 2.7 1.62 4.24 1.79v4.03c-1.44-.05-2.89-.35-4.2-.97-.57-.26-1.1-.59-1.62-.93-.01 2.92.01 5.84-.02 8.75-.08 1.4-.54 2.79-1.35 3.94-1.31 1.92-3.58 3.17-5.91 3.21-1.43.08-2.86-.31-4.08-1.03-2.02-1.19-3.44-3.37-3.65-5.71-.02-.5-.03-1-.01-1.49.18-1.9 1.12-3.72 2.58-4.96 1.66-1.44 3.98-2.13 6.15-1.72.02 1.48-.04 2.96-.04 4.44-.99-.32-2.15-.23-3.02.37-.63.41-1.11 1.04-1.36 1.75-.21.51-.15 1.07-.14 1.61.24 1.64 1.82 3.02 3.5 2.87 1.12-.01 2.19-.66 2.77-1.61.19-.33.4-.67.41-1.06.1-1.79.06-3.57.07-5.36.01-4.03-.01-8.05.02-12.07z" fill="#ffc8f4"/></g>
<circle cx="1015.7" cy="83.6" r="14.2" fill="#5a3ca8" fill-opacity="0.22"/>
<g transform="translate(1007.2 74.3) scale(0.771)" opacity=".24"><path d="M12.525.02c1.31-.02 2.61-.01 3.91-.02.08 1.53.63 3.09 1.75 4.17 1.12 1.11 2.7 1.62 4.24 1.79v4.03c-1.44-.05-2.89-.35-4.2-.97-.57-.26-1.1-.59-1.62-.93-.01 2.92.01 5.84-.02 8.75-.08 1.4-.54 2.79-1.35 3.94-1.31 1.92-3.58 3.17-5.91 3.21-1.43.08-2.86-.31-4.08-1.03-2.02-1.19-3.44-3.37-3.65-5.71-.02-.5-.03-1-.01-1.49.18-1.9 1.12-3.72 2.58-4.96 1.66-1.44 3.98-2.13 6.15-1.72.02 1.48-.04 2.96-.04 4.44-.99-.32-2.15-.23-3.02.37-.63.41-1.11 1.04-1.36 1.75-.21.51-.15 1.07-.14 1.61.24 1.64 1.82 3.02 3.5 2.87 1.12-.01 2.19-.66 2.77-1.61.19-.33.4-.67.41-1.06.1-1.79.06-3.57.07-5.36.01-4.03-.01-8.05.02-12.07z" fill="#ffc8f4"/></g>
<circle cx="1081.3" cy="55.8" r="18.6" fill="#5a3ca8" fill-opacity="0.20"/>
<g transform="translate(1070.2 43.7) scale(1.010)" opacity=".24"><path d="M12.525.02c1.31-.02 2.61-.01 3.91-.02.08 1.53.63 3.09 1.75 4.17 1.12 1.11 2.7 1.62 4.24 1.79v4.03c-1.44-.05-2.89-.35-4.2-.97-.57-.26-1.1-.59-1.62-.93-.01 2.92.01 5.84-.02 8.75-.08 1.4-.54 2.79-1.35 3.94-1.31 1.92-3.58 3.17-5.91 3.21-1.43.08-2.86-.31-4.08-1.03-2.02-1.19-3.44-3.37-3.65-5.71-.02-.5-.03-1-.01-1.49.18-1.9 1.12-3.72 2.58-4.96 1.66-1.44 3.98-2.13 6.15-1.72.02 1.48-.04 2.96-.04 4.44-.99-.32-2.15-.23-3.02.37-.63.41-1.11 1.04-1.36 1.75-.21.51-.15 1.07-.14 1.61.24 1.64 1.82 3.02 3.5 2.87 1.12-.01 2.19-.66 2.77-1.61.19-.33.4-.67.41-1.06.1-1.79.06-3.57.07-5.36.01-4.03-.01-8.05.02-12.07z" fill="#ffc8f4"/></g>
<circle cx="12.0" cy="88.0" r="1.1" fill="#fff" fill-opacity=".4"/>
<circle cx="31.0" cy="84.0" r="0.9" fill="#fff" fill-opacity=".4"/>
<circle cx="19.0" cy="95.0" r="0.8" fill="#fff" fill-opacity=".4"/>
<circle cx="66.0" cy="86.0" r="0.8" fill="#fff" fill-opacity=".4"/>
<circle cx="111.0" cy="76.0" r="0.8" fill="#fff" fill-opacity=".4"/>
<circle cx="124.0" cy="82.0" r="0.9" fill="#fff" fill-opacity=".4"/>
<circle cx="123.0" cy="87.0" r="0.8" fill="#fff" fill-opacity=".4"/>
<circle cx="141.0" cy="70.0" r="0.7" fill="#fff" fill-opacity=".4"/>
<circle cx="143.0" cy="97.0" r="1.2" fill="#fff" fill-opacity=".4"/>
<circle cx="146.0" cy="96.0" r="0.9" fill="#fff" fill-opacity=".4"/>
<circle cx="155.0" cy="92.0" r="0.7" fill="#fff" fill-opacity=".4"/>
<circle cx="361.0" cy="76.0" r="0.8" fill="#fff" fill-opacity=".4"/>
<circle cx="366.0" cy="80.0" r="0.7" fill="#fff" fill-opacity=".4"/>
<circle cx="356.0" cy="84.0" r="0.8" fill="#fff" fill-opacity=".4"/>
<circle cx="369.0" cy="90.0" r="0.7" fill="#fff" fill-opacity=".4"/>
<circle cx="354.0" cy="97.0" r="0.8" fill="#fff" fill-opacity=".4"/>
<circle cx="408.0" cy="86.0" r="0.6" fill="#fff" fill-opacity=".4"/>
<circle cx="412.0" cy="88.0" r="0.7" fill="#fff" fill-opacity=".4"/>
<circle cx="300.0" cy="95.0" r="0.6" fill="#fff" fill-opacity=".4"/>
<circle cx="520.0" cy="93.0" r="0.7" fill="#fff" fill-opacity=".4"/>
<circle cx="586.0" cy="86.0" r="0.7" fill="#fff" fill-opacity=".4"/>
<circle cx="596.0" cy="96.0" r="0.8" fill="#fff" fill-opacity=".4"/>
<circle cx="600.0" cy="95.0" r="0.7" fill="#fff" fill-opacity=".4"/>
<circle cx="880.0" cy="75.0" r="0.7" fill="#fff" fill-opacity=".4"/>
<circle cx="893.0" cy="79.0" r="0.7" fill="#fff" fill-opacity=".4"/>
<circle cx="900.0" cy="71.0" r="0.6" fill="#fff" fill-opacity=".4"/>
<circle cx="906.0" cy="89.0" r="0.8" fill="#fff" fill-opacity=".4"/>
<circle cx="918.0" cy="96.0" r="1.0" fill="#fff" fill-opacity=".4"/>
<circle cx="921.0" cy="95.0" r="0.7" fill="#fff" fill-opacity=".4"/>
<circle cx="962.0" cy="81.0" r="0.8" fill="#fff" fill-opacity=".4"/>
<circle cx="969.0" cy="78.0" r="0.7" fill="#fff" fill-opacity=".4"/>
<circle cx="972.0" cy="88.0" r="0.8" fill="#fff" fill-opacity=".4"/>
<circle cx="957.0" cy="100.0" r="0.7" fill="#fff" fill-opacity=".4"/>
<circle cx="1024.0" cy="67.0" r="0.6" fill="#fff" fill-opacity=".4"/>
<circle cx="1031.0" cy="75.0" r="0.7" fill="#fff" fill-opacity=".4"/>
<circle cx="1062.0" cy="91.0" r="0.8" fill="#fff" fill-opacity=".4"/>
<circle cx="1090.0" cy="84.0" r="0.6" fill="#fff" fill-opacity=".4"/>
<circle cx="1104.0" cy="97.0" r="0.9" fill="#fff" fill-opacity=".4"/>
<circle cx="800.0" cy="92.0" r="0.6" fill="#fff" fill-opacity=".4"/>
<circle cx="760.0" cy="97.0" r="0.7" fill="#fff" fill-opacity=".4"/>
<circle cx="700.0" cy="90.0" r="0.6" fill="#fff" fill-opacity=".4"/>
</g>
</svg>
<div class="t1">全栈AI视频专业创作工具，10倍提升短视频矩阵效率</div>
<div class="t2">一站式完成视频字幕提取、字幕擦除和多角色克隆配音等，真正用AI助力短剧、商家的全球化视频营销</div>
</div>
<div id="btns">
<div class="b" style="left:170.4px;width:76.5px"><svg viewBox="0 0 20 20" preserveAspectRatio="none" style="left:6.1px;top:6.2px;width:9.8px;height:9.7px"><rect x="8.200" y="5.200" width="11" height="14" rx="2" fill="#f9f9fb" stroke="#3a3a3a" stroke-width="1.700"/><path d="M11.800 9.800h5.400M14.500 8.400v1.400M12.200 15.800c2.200-1 3.400-3 3.900-5.800M12.600 11.800c.9 1.900 2.300 3.100 4.400 3.900" fill="none" stroke="#3a3a3a" stroke-width="1.300"/><path d="M2 0h8.600a2 2 0 0 1 2 2v9.600l2.600 3.800H2a2 2 0 0 1-2-2V2a2 2 0 0 1 2-2z" fill="#3a3a3a"/><path d="M8.600 5.200a3 3 0 1 0 .4 3.200v-1.600H6.600" fill="none" stroke="#f9f9fb" stroke-width="1.500"/></svg><span style="left:20.5px">视频翻译</span></div>
<div class="b" style="left:250.5px;width:76.4px"><svg viewBox="0 0 22 18" preserveAspectRatio="none" style="left:5.2px;top:6.0px;width:11.2px;height:9.0px"><rect x="4" y=".4" width="14" height="10.200" rx="1.600" fill="#3a3a3a"/><path d="M7.400 5.200l2.600 2.600 4.800-4.800" fill="none" stroke="#f9f9fb" stroke-width="2.100"/><path d="M.4 11.200h21.200v4.800a1.600 1.600 0 0 1-1.600 1.600H2a1.600 1.600 0 0 1-1.600-1.600z" fill="#3a3a3a"/><rect x="6.800" y="11.200" width="8.400" height="2.300" fill="#f9f9fb"/></svg><span style="left:20.1px">同款裂变</span></div>
<div class="b" style="left:330.7px;width:86.2px"><svg viewBox="0 0 18 18" preserveAspectRatio="none" style="left:6.2px;top:6.0px;width:8.9px;height:9.1px"><g fill="none" stroke="#3a3a3a" stroke-width="1.900"><path d="M1.200 7.800V3.400a2.200 2.200 0 0 1 4.400 0v4.400M1.200 5.400h4.400"/><path d="M16.600 2.200a3.200 3.200 0 1 0 .6 4.600V4.800h-2.600"/><path d="M.6 10.800h5.800M.6 14h5.800M.6 17.200h5.800M3.500 10.800v6.400"/><path d="M10.400 17.800l3.200-7.600 3.200 7.600M11.400 15.400h4.400"/></g></svg><span style="left:20.2px">智能去文字</span></div>
<div class="b" style="left:420.5px;width:75.9px"><svg viewBox="0 0 22 22" preserveAspectRatio="none" style="left:5.0px;top:5.1px;width:10.8px;height:10.8px"><rect x="1.200" y="1.200" width="19.600" height="19.600" rx="2.400" fill="none" stroke="#3a3a3a" stroke-width="2.300"/><g fill="#3a3a3a"><path d="M5 5.200h4.200v4.400H7.600V7H5z"/><path d="M12.800 5.200H17v4.400h-1.700V7h-2.500z"/><path d="M5 12.600h1.700v2.500H9.200v1.800H5z"/><path d="M12.800 15.100h2.500v-2.500H17v4.300h-4.200z"/><rect x="9.800" y="9.800" width="2.400" height="2.400"/></g></svg><span style="left:19.9px">翻译案例</span></div>
<div class="b" style="left:500.4px;width:76.5px"><svg viewBox="0 0 24 18" preserveAspectRatio="none" style="left:5.0px;top:6.0px;width:11.7px;height:9.0px"><path d="M.6 1h12.800v5h-2.200l-.5-2.400H8.800v11.600l2.400.5v1.700H2.800v-1.700l2.400-.5V3.600H3.300L2.800 6H.6z" fill="#3a3a3a"/><path d="M19.600 0l4 4.800h-2.500v8.400h2.500l-4 4.800-4-4.800h2.500V4.800h-2.500z" fill="#3a3a3a"/></svg><span style="left:19.9px">字幕提取</span></div>
<div class="b" style="left:580.5px;width:66.4px"><svg viewBox="0 0 22 22" preserveAspectRatio="none" style="left:5.0px;top:5.1px;width:10.8px;height:10.8px"><path d="M1.200 1.200h13.600l6 6v13.600H1.200z" fill="#f9f9fb" stroke="#3a3a3a" stroke-width="2.300" stroke-linejoin="round"/><path d="M14.600 1.200l6.200 6.200v13.400h-5z" fill="#3a3a3a"/><path d="M4.400 7h8.400M8.600 4.800V7M5 16.600c3.400-1.600 5.400-4.600 6-9M5.400 9.600c1.400 3 3.600 5 7 6.400" fill="none" stroke="#3a3a3a" stroke-width="2"/><path d="M12.200 18.600l3-8 3 8" fill="none" stroke="#f9f9fb" stroke-width="1.600"/></svg><span style="left:20.4px">去水映</span></div>
<div class="b" style="left:650.6px;width:76.5px"><svg viewBox="0 0 22 18" preserveAspectRatio="none" style="left:5.3px;top:6.0px;width:11.2px;height:9.0px"><path d="M3.600 2.600h9.200a2.200 2.200 0 0 1 2.200 2.200v8.400a2.200 2.200 0 0 1-2.200 2.200H3.600a2.200 2.200 0 0 1-2.200-2.200V4.800a2.200 2.200 0 0 1 2.200-2.200z" fill="#3a3a3a"/><path d="M15.400 8.200l6-4v9.600l-6-4z" fill="#3a3a3a"/><path d="M1.400 .2l19.400 17.600" stroke="#f9f9fb" stroke-width="3.400"/><path d="M.8 .8l19.400 17" stroke="#3a3a3a" stroke-width="1.700" stroke-linecap="round"/></svg><span style="left:20.6px">视频分割</span></div>
<div class="b" style="left:730.7px;width:76.5px"><svg viewBox="0 0 22 18" preserveAspectRatio="none" style="left:5.3px;top:6.0px;width:11.2px;height:9.0px"><circle cx="8.400" cy="4.600" r="4.400" fill="#3a3a3a"/><path d="M.4 17.600c0-5 3-7.600 8-7.600 2 0 3.700.4 5 1.300l-3.600 3.900 2.300 2.400z" fill="#3a3a3a"/><path d="M16.600 8.600l5 5-5 4.200-5-4.200z" fill="#3a3a3a"/><circle cx="16.600" cy="13.400" r="1.300" fill="#f9f9fb"/></svg><span style="left:20.5px">我的作品</span></div>
<div class="b" style="left:811.2px;width:76.4px"><svg viewBox="0 0 19 18" preserveAspectRatio="none" style="left:6.2px;top:6.0px;width:9.4px;height:9.0px"><ellipse cx="9.500" cy="9" rx="9.300" ry="8.900" fill="#3a3a3a"/><path d="M9.500 3.800l1.700 3.400 3.700.5-2.700 2.600.7 3.700-3.400-1.800-3.400 1.800.7-3.700-2.700-2.600 3.700-.5z" fill="#f9f9fb"/></svg><span style="left:19.8px">我的素材</span></div>
<div class="b on" style="left:891.2px;width:98.4px"><svg viewBox="0 0 19 19" preserveAspectRatio="none" style="left:5.7px;top:6.2px;width:9.6px;height:9.5px"><circle cx="9.500" cy="9.500" r="8.200" fill="none" stroke="#4c56a8" stroke-width="2"/><g fill="none" stroke="#4c56a8" stroke-width="1.500"><path d="M9.500 6.200l3.200 2.300-1.200 3.700h-4l-1.200-3.700z"/><path d="M9.500 2v4.200M2.600 8l3.700.5M5.400 16l2.100-3.800M13.600 16l-2.100-3.800M16.400 8l-3.700.5"/></g></svg><span style="left:20.0px"><i class="la">AIGC</i>算力点卡</span></div>
</div>
<div id="panel">
<div class="info" style="left:10.8px;top:10.2px;width:1081.8px;height:26.8px">
<svg class="ii" viewBox="0 0 24 24" style="left:26.6px"><circle cx="12" cy="12" r="12" fill="#4a63e0"/><circle cx="12" cy="12" r="5.2" fill="none" stroke="#fff" stroke-width="3.2"/></svg>
<span class="lab" style="left:45.2px">当前套餐：</span><span class="val" style="left:93.2px">会员套餐一 <i class="n">300</i>点 有效期<i class="n">30</i>天</span>
<svg class="ii" viewBox="0 0 24 24" style="left:387.8px"><circle cx="12" cy="12" r="12" fill="#4a63e0"/><path d="M11.400 6v7l4.600 2.400" fill="none" stroke="#fff" stroke-width="2.400" stroke-linecap="round" stroke-linejoin="round"/></svg>
<span class="lab" style="left:405.8px">套餐有效期：</span><span class="val" style="left:464.0px">会员套餐一 <i class="n">300</i>点 有效期<i class="n">30</i>天</span>
<svg class="ii" viewBox="0 0 24 24" style="left:747.8px"><circle cx="12" cy="12" r="12" fill="#4a63e0"/><path d="M12 7.200l4.800 4.800-4.800 4.800-4.800-4.800z" fill="#fff"/></svg>
<span class="lab" style="left:766.4px">点卡余额：</span><span class="val" style="left:814.8px"><i class="n">895</i></span>
<i class="dv" style="left:359.2px"></i><i class="dv" style="left:719.9px"></i>
</div>
<i class="vline" style="left:408.6px;top:37.2px;height:475.0px"></i>
<i class="tbar" style="left:10.6px;top:51.2px"></i>
<div class="ttl" style="left:18.2px;top:50.8px">购买套餐</div>
<div class="card sel" style="left:10.8px;top:77.8px">
<b class="bdg">套餐一</b><span class="pts">300点</span>
<div class="pr"><i>¥</i>68</div>
<div class="vd">有效期：30天</div>
</div>
<div class="card" style="left:143.2px;top:77.8px">
<b class="bdg">套餐二</b><span class="pts">1000点</span>
<div class="pr"><i>¥</i>189</div>
<div class="vd">有效期：180天</div>
</div>
<div class="card" style="left:275.6px;top:77.8px">
<b class="bdg">套餐三</b><span class="pts">5000点</span>
<div class="pr"><i>¥</i>699</div>
<div class="vd">有效期：365天</div>
</div>
<div class="card" style="left:10.8px;top:222.8px">
<b class="bdg">套餐四</b><span class="pts">48000点</span>
<div class="pr"><i>¥</i>6188</div>
<div class="vd">有效期：365天</div>
</div>
<div class="card" style="left:143.2px;top:222.8px">
<b class="bdg">套餐五</b><span class="pts">250000点</span>
<div class="pr"><i>¥</i>30000</div>
<div class="vd">有效期：365天</div>
</div>
<div class="card" style="left:275.6px;top:222.8px">
<span class="ch">已选套餐：</span>
<b class="cb" style="top:30.0px">套餐一</b>
<b class="cb" style="top:60.4px"><i class="n">300</i>卡点</b>
<b class="cb" style="top:90.8px">有效期：<i class="n">30</i>天</b>
</div>
<i class="hline" style="left:10.0px;top:472.4px;width:383.8px"></i>
<div class="pr foot" style="left:13.6px;top:486.6px"><i>¥</i>68</div>
<b class="buy" style="left:276.2px;top:486.8px">立即购买</b>
<div class="seg" style="left:423.4px;top:51.2px"><b class="on">购买记录</b><b class="off">算力消费记录</b></div>
<div class="th" style="left:423.4px;top:91.2px">
<b style="left:6.7px">套餐明细</b>
<b style="left:137.8px">价格</b>
<b style="left:268.9px">有效期</b>
<b style="left:400.1px">购买时间</b>
<b style="left:531.2px">购买状态</b>
</div>
<div class="empty" style="left:423.4px;top:124.2px">暂无数据</div>
</div>
</div>
</body>
</html>
